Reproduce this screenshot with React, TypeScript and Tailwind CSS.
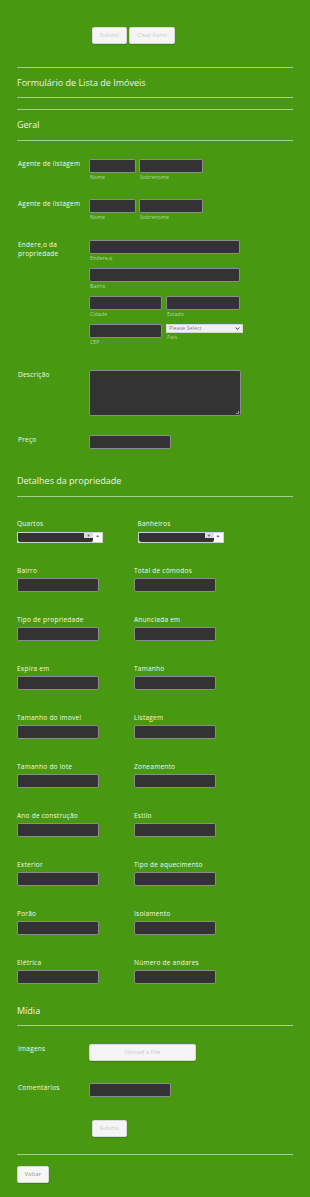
import React from "react";

const font = { fontFamily: '"Open Sans", "Liberation Sans", sans-serif' };

function Field({ w }: { w: string }) {
  return <div className={`h-[14px] ${w} rounded-[2px] border border-[#8c8c8c] bg-[#333333]`} />;
}

function Sub({ children }: { children: React.ReactNode }) {
  return (
    <div className="mt-[1px] h-[7px] pl-[1px] text-[5px] leading-[7px] tracking-[0.2px] text-[#b9dca3]">{children}</div>
  );
}

function Btn({ w, h, children }: { w: string; h: string; children: React.ReactNode }) {
  return (
    <div
      className={`${w} ${h} flex items-center justify-center rounded-[2px] border border-[#d9d9d9] bg-[#f5f5f5] text-[5.5px] tracking-[0.2px] text-[#c8c8c8] shadow-[0_1px_1px_rgba(0,0,0,0.15)]`}
    >
      {children}
    </div>
  );
}

function Rule({ className = "" }: { className?: string }) {
  return <div className={`mx-[17px] border-t border-[#a6ce8f] ${className}`} />;
}

function Title({ children, h = "h-[29px]", className = "" }: { children: React.ReactNode; h?: string; className?: string }) {
  return (
    <div className={`${h} flex items-center px-[17px] text-[9px] text-[#eef5e6] ${className}`}>{children}</div>
  );
}

function Label({ children }: { children: React.ReactNode }) {
  return (
    <div className="w-[71px] shrink-0 pt-[1px] text-[6.5px] leading-[8.7px] tracking-[0.25px] text-[#f3f8ee]">{children}</div>
  );
}

function NumberBox() {
  return (
    <div className="flex h-[11px] w-[86px] border border-[#d0d0d0] bg-white">
      <div className="w-[66px] rounded-bl-[2px] bg-[#333333]" />
      <div className="flex w-[9px] flex-col">
        <div className="flex h-[5px] items-center justify-center bg-[#dcdcdc] text-[4px] leading-none text-[#555]">▼</div>
        <div className="flex-1 rounded-br-[2px] bg-[#333333]" />
      </div>
      <div className="flex flex-1 items-start justify-center pt-[1px] text-[4px] leading-none text-[#555]">▲</div>
    </div>
  );
}

const pairs: [string, string][] = [
  ["Bairro", "Total de cômodos"],
  ["Tipo de propriedade", "Anunciada em"],
  ["Expira em", "Tamanho"],
  ["Tamanho do imovel", "Listagem"],
  ["Tamanho do lote", "Zoneamento"],
  ["Ano de construção", "Estilo"],
  ["Exterior", "Tipo de aquecimento"],
  ["Porão", "Isolamento"],
  ["Elétrica", "Número de andares"],
];

function CellLabel({ children }: { children: React.ReactNode }) {
  return <div className="h-[8px] text-[6.5px] leading-[8px] tracking-[0.25px] text-[#f3f8ee]">{children}</div>;
}

function GridCell({ label }: { label: string }) {
  return (
    <div>
      <CellLabel>{label}</CellLabel>
      <div className="mt-[3px]">
        <Field w="w-[82px]" />
      </div>
    </div>
  );
}

export default function App() {
  return (
    <div className="min-h-[1197px] w-full bg-[#489812]" style={font}>
      {/* top actions */}
      <div className="flex gap-[2px] pl-[92px] pt-[27px]">
        <Btn w="w-[35px]" h="h-[17px]">Submit</Btn>
        <Btn w="w-[46px]" h="h-[17px]">Clear Form</Btn>
      </div>

      <Rule className="mt-[23px]" />
      <Title>Formulário de Lista de Imóveis</Title>
      <Rule />
      <Rule className="mt-[11px]" />
      <Title h="h-[30px]">Geral</Title>
      <Rule />

      {/* Geral */}
      <div className="pl-[18px]">
        <div className="mt-[18px] flex">
          <Label>Agente de listagem</Label>
          <div className="flex gap-[3px]">
            <div>
              <Field w="w-[47px]" />
              <Sub>Nome</Sub>
            </div>
            <div>
              <Field w="w-[64px]" />
              <Sub>Sobrenome</Sub>
            </div>
          </div>
        </div>

        <div className="mt-[18px] flex">
          <Label>Agente de listagem</Label>
          <div className="flex gap-[3px]">
            <div>
              <Field w="w-[47px]" />
              <Sub>Nome</Sub>
            </div>
            <div>
              <Field w="w-[64px]" />
              <Sub>Sobrenome</Sub>
            </div>
          </div>
        </div>

        <div className="mt-[19px] flex">
          <Label>
            Endere,o da
            <br />
            propriedade
          </Label>
          <div className="flex flex-col gap-[6px]">
            <div>
              <Field w="w-[151px]" />
              <Sub>Endere,o</Sub>
            </div>
            <div>
              <Field w="w-[151px]" />
              <Sub>Bairro</Sub>
            </div>
            <div className="flex gap-[4px]">
              <div>
                <Field w="w-[73px]" />
                <Sub>Cidade</Sub>
              </div>
              <div>
                <Field w="w-[74px]" />
                <Sub>Estado</Sub>
              </div>
            </div>
            <div className="flex gap-[4px]">
              <div>
                <Field w="w-[73px]" />
                <Sub>CEP</Sub>
              </div>
              <div>
                <div className="flex h-[9px] w-[77px] items-center justify-between border border-[#d6d6d6] bg-[#f0f0f0] px-[2px] text-[5px] tracking-[0.2px] text-[#777]">
                  <span>Please Select</span>
                  <svg viewBox="0 0 10 10" className="h-[5px] w-[5px]">
                    <path d="M1.5 3 L5 6.8 L8.5 3" fill="none" stroke="#333" strokeWidth="2" />
                  </svg>
                </div>
                <Sub>Pais</Sub>
              </div>
            </div>
          </div>
        </div>

        <div className="mt-[24px] flex">
          <Label>Descrição</Label>
          <div className="relative h-[46px] w-[152px] rounded-[2px] border border-[#8c8c8c] bg-[#333333]">
            <div className="absolute bottom-[1px] right-[1px] h-[3px] w-[3px] border-b border-r border-[#999]" />
          </div>
        </div>

        <div className="mt-[19px] flex">
          <Label>Preço</Label>
          <Field w="w-[82px]" />
        </div>
      </div>

      <Title h="h-[30px]" className="mt-[17px]">
        Detalhes da propriedade
      </Title>
      <Rule />

      {/* Detalhes */}
      <div className="px-[17px]">
        <div className="mt-[23px] grid grid-cols-[117px_1fr]">
          <div>
            <CellLabel>Quartos</CellLabel>
            <div className="mt-[4px]">
              <NumberBox />
            </div>
          </div>
          <div className="pl-[3.5px]">
            <CellLabel>Banheiros</CellLabel>
            <div className="mt-[4px]">
              <NumberBox />
            </div>
          </div>
        </div>

        <div className="mt-[24px] grid grid-cols-[117px_1fr] gap-y-[24px]">
          {pairs.map(([a, b]) => (
            <React.Fragment key={a}>
              <GridCell label={a} />
              <GridCell label={b} />
            </React.Fragment>
          ))}
        </div>
      </div>

      <Title className="mt-[12px]">Mídia</Title>
      <Rule />

      <div className="pl-[18px]">
        <div className="mt-[18px] flex">
          <Label>Imagens</Label>
          <Btn w="w-[107px]" h="h-[17px]">Upload a File</Btn>
        </div>
        <div className="mt-[22px] flex">
          <Label>Comentários</Label>
          <Field w="w-[82px]" />
        </div>
      </div>

      <div className="mt-[23px] pl-[92px]">
        <Btn w="w-[35px]" h="h-[17px]">Submit</Btn>
      </div>

      <Rule className="mt-[17px]" />

      <div className="mt-[11px] pl-[17px]">
        <div className="flex h-[17px] w-[32px] items-center justify-center rounded-[2px] border border-[#d9d9d9] bg-[#f7f7f7] text-[5.5px] tracking-[0.2px] text-[#888] shadow-[0_1px_1px_rgba(0,0,0,0.15)]">
          Voltar
        </div>
      </div>
    </div>
  );
}
